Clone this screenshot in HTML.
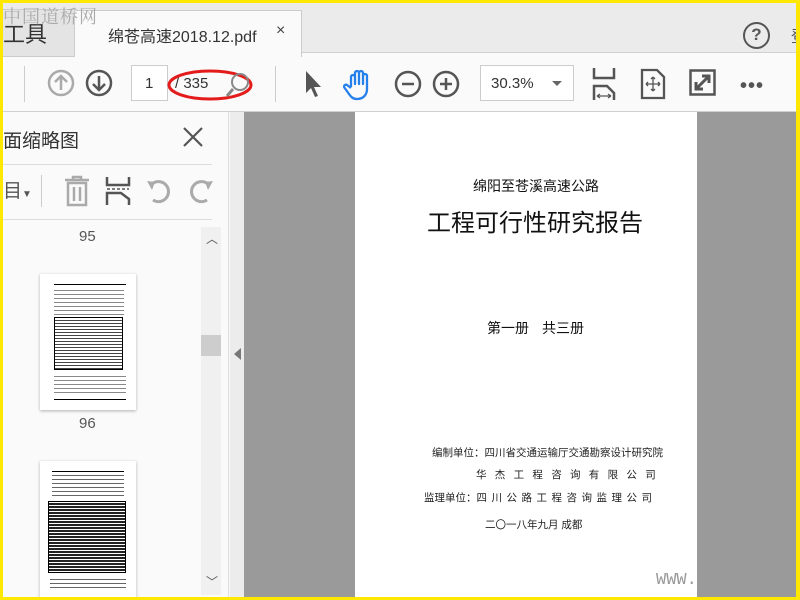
<!DOCTYPE html>
<html><head><meta charset="utf-8"><style>
*{margin:0;padding:0;box-sizing:border-box}
body{width:800px;height:600px;position:relative;overflow:hidden;background:#fee700;font-family:"Liberation Sans","Noto Sans CJK SC",sans-serif}
.a{position:absolute}
.cn{font-family:"Liberation Sans","Noto Sans CJK SC",sans-serif}
</style></head><body>
<div class="a" style="left:3px;top:3px;width:793px;height:594px;background:#fafafa;overflow:hidden">
 <div class="a" style="left:0;top:0;width:793px;height:50px;background:#ebebeb;border-bottom:1px solid #d0d0d0"></div>
 <div class="a" style="left:-3px;top:6px;width:77px;height:48px;background:#e4e4e4;border:1px solid #ccc"></div>
 <div class="a" style="left:0;top:14px;font-size:22px;color:#333">工具</div>
 <div class="a" style="left:71px;top:7px;width:228px;height:47px;background:#fafafa;border:1px solid #ccc;border-bottom:none"></div>
 <div class="a" style="left:105px;top:20px;font-size:16px;color:#333">绵苍高速2018.12.pdf</div>
 <div class="a" style="left:273px;top:19px;font-size:16px;color:#444">×</div>
 <div class="a" style="left:740px;top:19px;width:27px;height:27px;border:2.5px solid #555;border-radius:50%;text-align:center;font-size:17px;font-weight:bold;color:#555;line-height:22px">?</div>
 <div class="a" style="left:788px;top:20px;font-size:16px;color:#555">登</div>
 <div class="a" style="left:0;top:0;font-size:18px;color:#aaa;letter-spacing:1px;font-family:'Liberation Serif','Noto Serif CJK SC',serif">中国道桥网</div>
 <div class="a" style="left:0;top:108px;width:793px;height:1px;background:#d0d0d0"></div>
 <div class="a" style="left:21px;top:63px;width:1px;height:36px;background:#ccc"></div>
 <svg class="a" style="left:44px;top:66px" width="28" height="28"><circle cx="14" cy="14" r="12" fill="none" stroke="#aaa" stroke-width="2.5"/><path d="M14 21V8M8 13l6-6 6 6" fill="none" stroke="#aaa" stroke-width="2.5"/></svg>
 <svg class="a" style="left:82px;top:66px" width="28" height="28"><circle cx="14" cy="14" r="12" fill="none" stroke="#555" stroke-width="2.5"/><path d="M14 7v13M8 15l6 6 6-6" fill="none" stroke="#555" stroke-width="2.5"/></svg>
 <div class="a" style="left:128px;top:62px;width:37px;height:36px;background:#fff;border:1px solid #ccc"></div>
 <div class="a" style="left:142px;top:72px;font-size:15px;color:#333">1</div>
 <div class="a" style="left:172px;top:72px;font-size:15px;color:#333">/ 335</div>
 <svg class="a" style="left:160px;top:62px" width="95" height="40"><ellipse cx="47" cy="20" rx="41" ry="14" fill="none" stroke="#e41b1b" stroke-width="3"/><circle cx="77" cy="17" r="8" fill="none" stroke="#888" stroke-width="2"/><path d="M70 24l-6 7" stroke="#888" stroke-width="3"/></svg>
 <div class="a" style="left:272px;top:63px;width:1px;height:36px;background:#ccc"></div>
 <svg class="a" style="left:298px;top:66px" width="26" height="30"><path d="M5 2v22l5-5 4 9 3-1-4-9h7z" fill="#555"/></svg>
 <svg class="a" style="left:340px;top:66px" width="34" height="32"><path d="M8 18V8a2 2 0 014 0v7V4a2 2 0 014 0v11V4a2 2 0 014 0v11V7a2 2 0 014 0v13c0 6-4 10-10 10-4 0-6-2-8-5l-5-7a2 2 0 013-2l4 3" fill="none" stroke="#2680eb" stroke-width="2.3" stroke-linejoin="round"/></svg>
 <svg class="a" style="left:391px;top:67px" width="28" height="28"><circle cx="14" cy="14" r="12" fill="none" stroke="#555" stroke-width="2.5"/><path d="M8 14h12" stroke="#555" stroke-width="2.5"/></svg>
 <svg class="a" style="left:429px;top:67px" width="28" height="28"><circle cx="14" cy="14" r="12" fill="none" stroke="#555" stroke-width="2.5"/><path d="M8 14h12M14 8v12" stroke="#555" stroke-width="2.5"/></svg>
 <div class="a" style="left:477px;top:62px;width:94px;height:36px;background:#fff;border:1px solid #ccc"></div>
 <div class="a" style="left:488px;top:72px;font-size:15px;color:#333">30.3%</div>
 <div class="a" style="left:549px;top:78px;border-left:5px solid transparent;border-right:5px solid transparent;border-top:5px solid #666"></div>
 <svg class="a" style="left:588px;top:64px" width="28" height="34"><path d="M3 1v10h20V1M3 33V19h13l7 7v7" fill="none" stroke="#555" stroke-width="2.5"/><path d="M6 29h14M6 29l3-2M6 29l3 2M20 29l-3-2M20 29l-3 2" stroke="#555" stroke-width="1.2"/></svg>
 <svg class="a" style="left:637px;top:65px" width="26" height="32"><path d="M2 2h15l7 7v21H2z" fill="none" stroke="#555" stroke-width="2.3"/><path d="M13 9v14M6 16h14M13 9l-2 2M13 9l2 2M13 23l-2-2M13 23l2-2M6 16l2-2M6 16l2 2M20 16l-2-2M20 16l-2 2" stroke="#555" stroke-width="1.3"/></svg>
 <svg class="a" style="left:686px;top:66px" width="28" height="28"><rect x="1.5" y="1.5" width="24" height="24" fill="none" stroke="#555" stroke-width="2.5"/><path d="M7 20l13-13M13 7h7v7M7 13v7h7" fill="none" stroke="#555" stroke-width="3"/></svg>
 <div class="a" style="left:737px;top:72px;font-size:20px;color:#555;letter-spacing:1px;font-weight:bold">•••</div>
 <div class="a" style="left:0;top:109px;width:226px;height:485px;background:#fafafa;border-right:1px solid #ddd"></div>
 <div class="a" style="left:0;top:123px;font-size:19px;color:#333">面缩略图</div>
 <svg class="a" style="left:178px;top:122px" width="24" height="24"><path d="M3 3l18 18M21 3L3 21" stroke="#555" stroke-width="2.2"/></svg>
 <div class="a" style="left:0;top:161px;width:209px;height:1px;background:#ddd"></div>
 <div class="a" style="left:0;top:173px;font-size:19px;color:#555">目<span style="font-size:10px">▼</span></div>
 <div class="a" style="left:38px;top:172px;width:1px;height:32px;background:#ccc"></div>
 <svg class="a" style="left:60px;top:172px" width="28" height="32"><path d="M2 5h24M10 5V2h8v3M5 8h18v22H5zM11 12v14M17 12v14" fill="none" stroke="#aaa" stroke-width="2.5"/></svg>
 <svg class="a" style="left:102px;top:172px" width="28" height="32"><path d="M2 2v8h22V2M2 30V18h14l8 6v6" fill="none" stroke="#555" stroke-width="2.5"/><path d="M2 14h22" stroke="#555" stroke-width="1.5" stroke-dasharray="3 2"/></svg>
 <svg class="a" style="left:142px;top:174px" width="28" height="28"><path d="M6 8A10 10 0 1 1 8 23" fill="none" stroke="#aaa" stroke-width="3"/><path d="M2 4l8 1-3 8z" fill="#aaa"/></svg>
 <svg class="a" style="left:184px;top:174px" width="28" height="28"><path d="M22 8A10 10 0 1 0 20 23" fill="none" stroke="#aaa" stroke-width="3"/><path d="M26 4l-8 1 3 8z" fill="#aaa"/></svg>
 <div class="a" style="left:0;top:216px;width:209px;height:1px;background:#ddd"></div>
 <div class="a" style="left:198px;top:224px;width:20px;height:368px;background:#f0f0f0"></div>
 <div class="a" style="left:198px;top:332px;width:20px;height:21px;background:#cdcdcd"></div>
 <div class="a" style="left:203px;top:227px;font-size:12px;color:#555">︿</div>
 <div class="a" style="left:203px;top:570px;font-size:12px;color:#555">﹀</div>
 <div class="a" style="left:76px;top:225px;font-size:15px;color:#555">95</div>
 <div class="a" style="left:37px;top:271px;width:96px;height:136px;background:#fff;box-shadow:0 1px 3px rgba(0,0,0,.3)">
  <div class="a" style="left:14px;top:10px;width:72px;height:1px;background:#000"></div>
  <div class="a" style="left:14px;top:14px;width:70px;height:28px;background:repeating-linear-gradient(#fff 0 2px,#888 2px 3px,#fff 3px 4px)"></div>
  <div class="a" style="left:14px;top:43px;width:69px;height:53px;border:1px solid #000;background:repeating-linear-gradient(#fff 0 2px,#444 2px 3px),#fff"></div>
  <div class="a" style="left:14px;top:100px;width:72px;height:20px;background:repeating-linear-gradient(#fff 0 2px,#888 2px 3px,#fff 3px 4px)"></div>
  <div class="a" style="left:14px;top:125px;width:72px;height:1px;background:#000"></div>
 </div>
 <div class="a" style="left:76px;top:412px;font-size:15px;color:#555">96</div>
 <div class="a" style="left:37px;top:458px;width:96px;height:140px;background:#fff;box-shadow:0 1px 3px rgba(0,0,0,.3)">
  <div class="a" style="left:12px;top:10px;width:72px;height:1px;background:#000"></div>
  <div class="a" style="left:12px;top:12px;width:72px;height:24px;background:repeating-linear-gradient(#fff 0 2px,#666 2px 3px,#fff 3px 4px)"></div>
  <div class="a" style="left:8px;top:40px;width:78px;height:72px;border:1px solid #000;background:repeating-linear-gradient(#fff 0 1px,#222 1px 3px),#fff"></div>
  <div class="a" style="left:10px;top:116px;width:76px;height:12px;background:repeating-linear-gradient(#fff 0 2px,#666 2px 3px,#fff 3px 4px)"></div>
 </div>
 <div class="a" style="left:227px;top:109px;width:15px;height:485px;background:#ececec"></div>
 <div class="a" style="left:231px;top:345px;border-top:6px solid transparent;border-bottom:6px solid transparent;border-right:7px solid #777"></div>
 <div class="a" style="left:241px;top:109px;width:552px;height:485px;background:#9a9a9a"></div>
 <div class="a" style="left:352px;top:109px;width:342px;height:485px;background:#fff"></div>
 <div class="a cn" style="left:362px;top:173px;width:342px;text-align:center;font-size:14px;color:#111">绵阳至苍溪高速公路</div>
 <div class="a cn" style="left:361px;top:200px;width:342px;text-align:center;font-size:24px;color:#111">工程可行性研究报告</div>
 <div class="a cn" style="left:484px;top:315px;font-size:14px;color:#111">第一册<span style="display:inline-block;width:13px"></span>共三册</div>
 <div class="a cn" style="left:429px;top:442px;font-size:10.5px;color:#222">编制单位：四川省交通运输厅交通勘察设计研究院</div>
 <div class="a cn" style="left:473px;top:464px;font-size:10.5px;color:#222;letter-spacing:8.3px">华杰工程咨询有限公司</div>
 <div class="a cn" style="left:421px;top:487px;font-size:10.5px;color:#222">监理单位：<span style="letter-spacing:4.5px">四川公路工程咨询监理公司</span></div>
 <div class="a cn" style="left:482px;top:514px;font-size:10.5px;color:#222">二〇一八年九月 成都</div>
 <div class="a" style="left:653px;top:568px;font-size:17px;color:#999;font-family:'Liberation Mono',monospace">WWW.</div>
</div>
</body></html>
